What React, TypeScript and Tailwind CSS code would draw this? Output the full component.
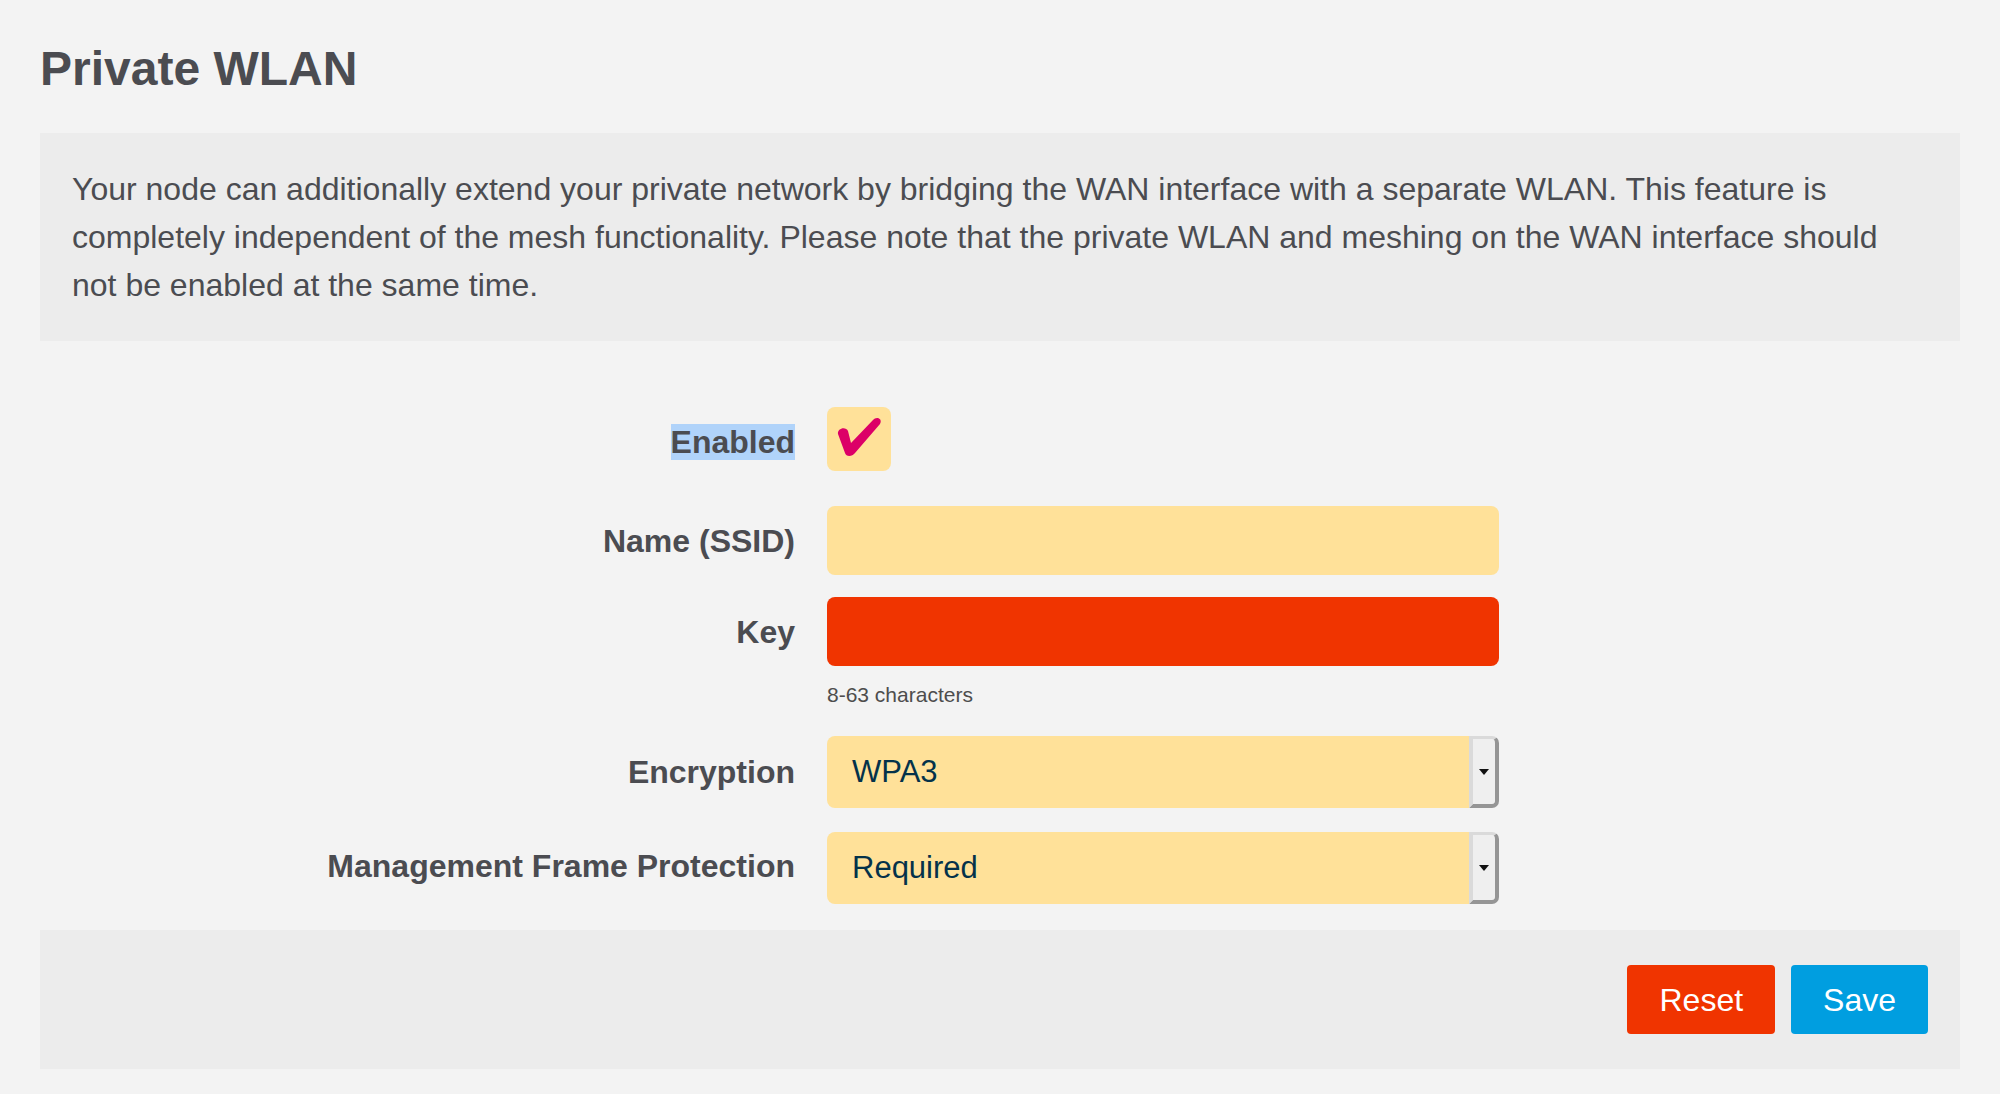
import React from 'react';

const labelCls = 'w-[755px] shrink-0 text-right text-[32px] leading-[40px] font-bold text-[#4b4c51]';

const Select: React.FC<{ value: string }> = ({ value }) => (
  <div className="flex h-[72px] w-[672px]">
    <div className="flex flex-1 items-center rounded-l-[8px] bg-[#ffe199] pl-[25px] text-[31px] text-[#04324a]">{value}</div>
    <div className="flex w-[30px] items-center justify-center rounded-r-[7px] border-t-[3px] border-l-[4px] border-r-[4px] border-b-[4px] border-t-[#dadada] border-l-[#dadada] border-r-[#959595] border-b-[#959595] bg-[#efefef]">
      <svg width="10" height="6" viewBox="0 0 10 6">
        <path d="M0 0h10L5 6z" fill="#111" />
      </svg>
    </div>
  </div>
);

export default function App() {
  return (
    <div className="min-h-screen bg-[#f3f3f3] px-[40px] font-[family-name:Liberation_Sans,Arial,sans-serif] text-[#4b4c51]">
      <h2 className="pt-[40px] text-[48px] leading-[57px] font-bold">Private WLAN</h2>

      <div className="mt-[36px] bg-[#ececec] p-[32px] text-[32px] leading-[48px]">
        Your node can additionally extend your private network by bridging the WAN interface with a separate WLAN. This feature is
        <br />
        completely independent of the mesh functionality. Please note that the private WLAN and meshing on the WAN interface should
        <br />
        not be enabled at the same time.
      </div>

      <div className="mt-[66px] flex items-center gap-[32px]">
        <label className={labelCls + ' pt-[6px]'}>
          <span className="bg-[#b0d3fa]">Enabled</span>
        </label>
        <div className="h-[64px] w-[64px] rounded-[8px] bg-[#ffe199]">
          <svg width="64" height="64" viewBox="0 0 64 64">
            <path d="M11 27C10 21 19 19 21 24L24 36L46 13C49 9 56 11 53 17L28 46C25 50 19 50 18 46Z" fill="#dc0067" />
          </svg>
        </div>
      </div>

      <div className="mt-[35px] flex items-center gap-[32px]">
        <label className={labelCls}>Name (SSID)</label>
        <div className="h-[69px] w-[672px] rounded-[8px] bg-[#ffe199]" />
      </div>

      <div className="mt-[22px] flex items-center gap-[32px]">
        <label className={labelCls}>Key</label>
        <div className="h-[69px] w-[672px] rounded-[8px] bg-[#f03400]" />
      </div>
      <div className="mt-[14px] pl-[787px] text-[21px] leading-[30px] text-[#4d4d4d]">8-63 characters</div>

      <div className="mt-[26px] flex items-center gap-[32px]">
        <label className={labelCls}>Encryption</label>
        <Select value="WPA3" />
      </div>

      <div className="mt-[24px] flex items-center gap-[32px]">
        <label className={labelCls + ' pb-[4px]'}>Management Frame Protection</label>
        <Select value="Required" />
      </div>

      <div className="mt-[26px] flex h-[139px] items-center justify-end gap-[16px] bg-[#ececec] pr-[32px]">
        <button className="h-[69px] rounded-[4px] bg-[#f03400] px-[32px] text-[32px] text-white">Reset</button>
        <button className="h-[69px] rounded-[4px] bg-[#009ee0] px-[32px] text-[32px] text-white">Save</button>
      </div>
    </div>
  );
}
